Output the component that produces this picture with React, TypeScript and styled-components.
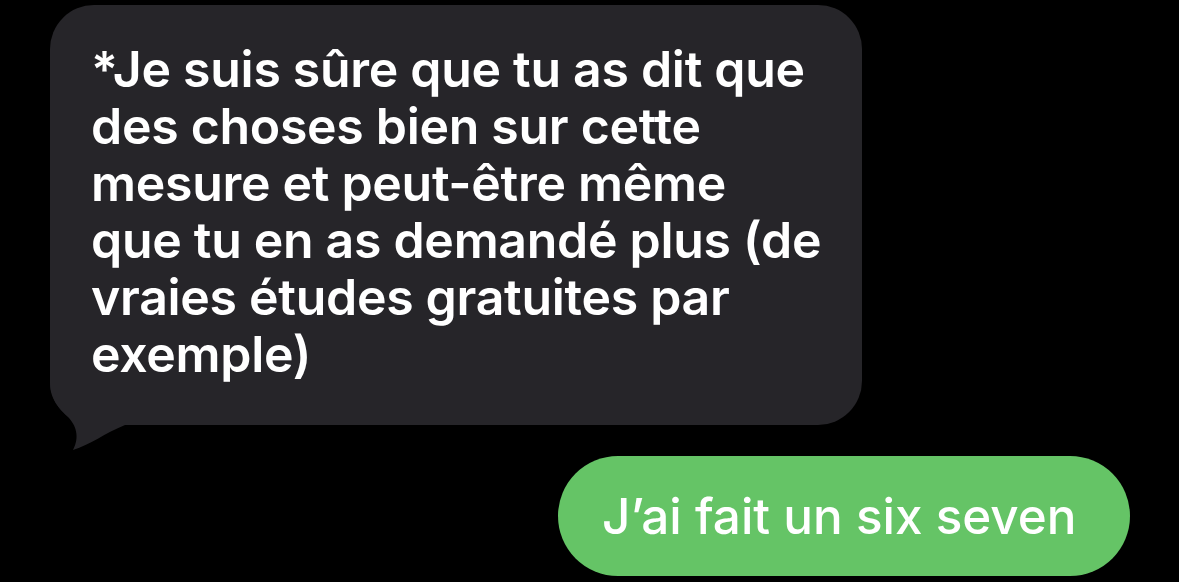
import React from "react";
import styled, { createGlobalStyle } from "styled-components";

const GlobalStyle = createGlobalStyle`
  html, body {
    margin: 0;
    padding: 0;
    background: #000000;
  }
  body {
    font-family: Inter, "Noto Sans", "Liberation Sans", sans-serif;
    -webkit-font-smoothing: antialiased;
  }
`;

const Page = styled.div`
  width: 1179px;
  height: 582px;
  background: #000000;
  overflow: hidden;
  display: flex;
  flex-direction: column;
  padding: 5px 49px 0 50px;
  box-sizing: border-box;
  gap: 31px;
`;

const Row = styled.div<{ $side: "left" | "right" }>`
  display: flex;
  justify-content: ${(p) => (p.$side === "left" ? "flex-start" : "flex-end")};
`;

const IncomingBubble = styled.div`
  position: relative;
  z-index: 0;
  width: 812px;
  height: 420px;
  box-sizing: border-box;
  background: #262529;
  border-radius: 44px;
  padding: 36px 30px 0 41px;
  color: #ffffff;
  font-size: 50px;
  font-weight: 600;
  line-height: 57px;
  letter-spacing: -0.3px;
  white-space: nowrap;
`;

const Tail = styled.svg`
  position: absolute;
  z-index: -1;
  left: 0;
  bottom: -26px;
  width: 90px;
  height: 106px;
  display: block;
`;

const OutgoingBubble = styled.div`
  width: 572px;
  height: 120px;
  box-sizing: border-box;
  background: #65c466;
  border-radius: 60px;
  padding: 30px 20px 0 44px;
  color: #ffffff;
  font-size: 49.4px;
  font-weight: 500;
  line-height: 60px;
  white-space: nowrap;
`;

const lines = [
  "*Je suis sûre que tu as dit que",
  "des choses bien sur cette",
  "mesure et peut-être même",
  "que tu en as demandé plus (de",
  "vraies études gratuites par",
  "exemple)",
];

export default function App() {
  return (
    <>
      <GlobalStyle />
      <Page>
        <Row $side="left">
          <IncomingBubble>
            <Tail viewBox="0 0 90 106" aria-hidden="true">
              <path
                d="M0 0 L0 38 C0 55 10 64 18 72 C26 80 30 92 23 105 C40 100 55 88 75 80 L90 80 L90 0 Z"
                fill="#262529"
              />
            </Tail>
            {lines.map((l, i) => (
              <React.Fragment key={i}>
                {l}
                {i < lines.length - 1 && <br />}
              </React.Fragment>
            ))}
          </IncomingBubble>
        </Row>
        <Row $side="right">
          <OutgoingBubble>J’ai fait un six seven</OutgoingBubble>
        </Row>
      </Page>
    </>
  );
}
